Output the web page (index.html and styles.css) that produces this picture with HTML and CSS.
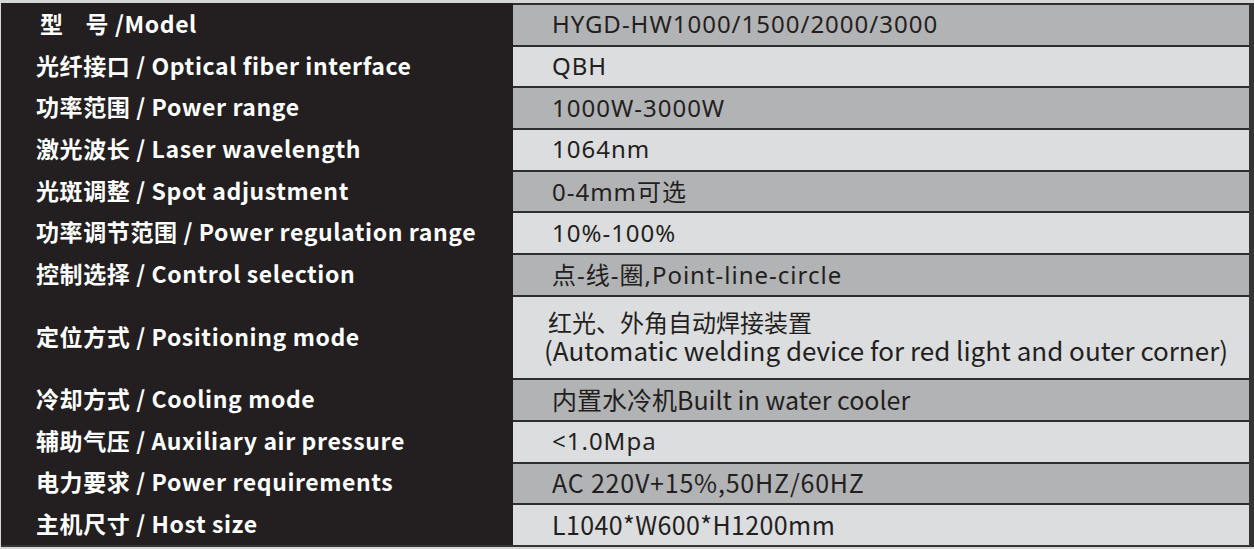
FILE: index.html
```html
<!DOCTYPE html>
<html lang="zh">
<head>
<meta charset="utf-8">
<title>Specifications</title>
<link rel="stylesheet" href="styles.css">
</head>
<body>
<div class="sheet">
  <div class="k first">型<span class="gap"></span>号 /Model</div>
  <div class="v dark">HYGD-HW1000/1500/2000/3000</div>

  <div class="k">光纤接口 / Optical fiber interface</div>
  <div class="v light">QBH</div>

  <div class="k">功率范围 / Power range</div>
  <div class="v dark">1000W-3000W</div>

  <div class="k">激光波长 / Laser wavelength</div>
  <div class="v light">1064nm</div>

  <div class="k">光斑调整 / Spot adjustment</div>
  <div class="v dark">0-4mm可选</div>

  <div class="k">功率调节范围 / Power regulation range</div>
  <div class="v light">10%-100%</div>

  <div class="k">控制选择 / Control selection</div>
  <div class="v dark">点-线-圈,Point-line-circle</div>

  <div class="k">定位方式 / Positioning mode</div>
  <div class="v light cond two">
    <span class="l1">红光、外角自动焊接装置</span>
    <span class="l2">(Automatic welding device for red light and outer corner)</span>
  </div>

  <div class="k">冷却方式 / Cooling mode</div>
  <div class="v dark cond">内置水冷机Built in water cooler</div>

  <div class="k">辅助气压 / Auxiliary air pressure</div>
  <div class="v light">&lt;1.0Mpa</div>

  <div class="k">电力要求 / Power requirements</div>
  <div class="v dark cond wide">AC 220V+15%,50HZ/60HZ</div>

  <div class="k">主机尺寸 / Host size</div>
  <div class="v light cond semi">L1040*W600*H1200mm</div>
</div>
</body>
</html>
```

FILE: styles.css
```css
html, body {
  margin: 0;
  padding: 0;
}

body {
  background: #d6d6d6;
  width: 1254px;
  height: 549px;
  overflow: hidden;
}

.sheet {
  margin: 3px 0 0 1px;
  width: 1248px;
  height: 542px;
  background: #231f20;
  border-right: 5px solid #343434;
  border-bottom: 2px solid #343434;
  display: grid;
  grid-template-columns: 512px 1fr;
  grid-template-rows: repeat(7, 1fr) 2fr repeat(4, 1fr);
}

.k {
  display: flex;
  align-items: center;
  padding-left: 35px;
  padding-bottom: 2px;
  color: #ffffff;
  font-family: "Noto Sans CJK SC", sans-serif;
  font-weight: 700;
  font-size: 23px;
  letter-spacing: 0.6px;
  white-space: nowrap;
}

.k.first {
  padding-left: 39px;
}

.gap {
  display: inline-block;
  width: 22px;
}

.v {
  display: flex;
  align-items: center;
  padding-left: 39px;
  padding-bottom: 2px;
  border-top: 2px solid #2e2e2e;
  color: #231f20;
  font-family: "Noto Sans", "Noto Sans CJK SC", sans-serif;
  font-weight: 400;
  font-size: 24px;
  letter-spacing: 1px;
  white-space: nowrap;
}

.v.dark {
  background: #b2b3b5;
}

.v.light {
  background: #dcdddf;
}

.v.cond {
  font-family: "Noto Sans CJK SC", sans-serif;
  font-weight: 400;
  font-size: 25px;
  letter-spacing: 0;
}

.v.cond.wide {
  letter-spacing: 0.8px;
}

.v.cond.semi {
  letter-spacing: 0.4px;
}

.v.two {
  display: flex;
  flex-direction: column;
  align-items: flex-start;
  justify-content: center;
  padding-left: 31px;
  padding-bottom: 4px;
}

.two .l1 {
  display: block;
  padding-left: 4px;
  font-size: 24px;
  line-height: 27px;
}

.two .l2 {
  display: block;
  font-size: 26px;
  line-height: 29px;
}
```
